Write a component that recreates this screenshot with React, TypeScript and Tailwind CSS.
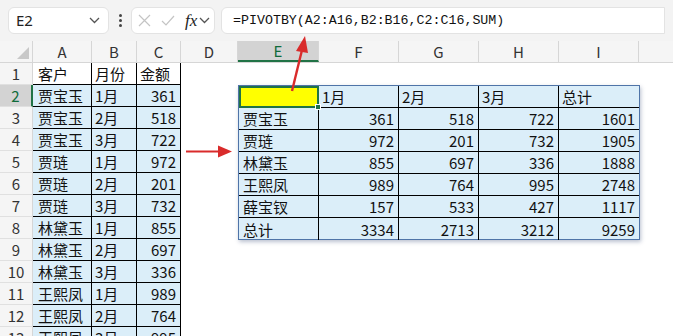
import { Fragment } from 'react';

const cjk = { fontFamily: '"Noto Sans CJK SC", "Noto Sans", sans-serif' };

const source: [string, string, number][] = [
  ['贾宝玉', '1月', 361], ['贾宝玉', '2月', 518], ['贾宝玉', '3月', 722],
  ['贾琏', '1月', 972], ['贾琏', '2月', 201], ['贾琏', '3月', 732],
  ['林黛玉', '1月', 855], ['林黛玉', '2月', 697], ['林黛玉', '3月', 336],
  ['王熙凤', '1月', 989], ['王熙凤', '2月', 764], ['王熙凤', '3月', 995],
];

const pivot: [string, number, number, number, number][] = [
  ['贾宝玉', 361, 518, 722, 1601],
  ['贾琏', 972, 201, 732, 1905],
  ['林黛玉', 855, 697, 336, 1888],
  ['王熙凤', 989, 764, 995, 2748],
  ['薛宝钗', 157, 533, 427, 1117],
  ['总计', 3334, 2713, 3212, 9259],
];

const cols = [
  { l: 'A', w: 'w-[59px]' }, { l: 'B', w: 'w-[45px]' }, { l: 'C', w: 'w-[44px]' },
  { l: 'D', w: 'w-[57px]' }, { l: 'E', w: 'w-[81px]' }, { l: 'F', w: 'w-[80px]' },
  { l: 'G', w: 'w-[80px]' }, { l: 'H', w: 'w-[80px]' }, { l: 'I', w: 'w-[80px]' },
];

function Chevron({ className }: { className?: string }) {
  return (
    <svg width="11" height="7" viewBox="0 0 11 7" className={className}>
      <path d="M1 1l4.5 4.5L10 1" fill="none" stroke="#555" strokeWidth="1.3" />
    </svg>
  );
}

function TopBar() {
  return (
    <div className="flex items-center h-[41px] bg-[#f3f3f3] px-2 gap-0">
      <div className="flex items-center justify-between w-[101px] h-[27px] bg-white border border-[#e3e3e3] rounded-md pl-[7px] pr-[8px]">
        <span className="text-[15px] text-[#222]" style={{ fontFamily: '"Noto Sans", sans-serif' }}>E2</span>
        <Chevron />
      </div>
      <div className="flex flex-col gap-[2px] w-[22px] items-center">
        <span className="w-[3px] h-[3px] rounded-full bg-[#444]" />
        <span className="w-[3px] h-[3px] rounded-full bg-[#444]" />
        <span className="w-[3px] h-[3px] rounded-full bg-[#444]" />
      </div>
      <div className="flex items-center w-[84px] h-[27px] bg-white border border-[#e3e3e3] rounded-md pl-[6px] gap-[10px]">
        <svg width="13" height="13" viewBox="0 0 13 13">
          <path d="M1 1l11 11M12 1L1 12" stroke="#c4c4c4" strokeWidth="1.2" />
        </svg>
        <svg width="14" height="11" viewBox="0 0 14 11">
          <path d="M1 6l4 4L13 1" fill="none" stroke="#c4c4c4" strokeWidth="1.2" />
        </svg>
        <div className="flex items-center gap-[2px]">
          <span className="italic text-[17px] leading-none text-[#222]" style={{ fontFamily: '"Liberation Serif", serif' }}>fx</span>
          <Chevron />
        </div>
      </div>
      <div className="flex items-center flex-1 ml-[6px] h-[27px] bg-white border border-[#e3e3e3] rounded-l-md pl-[11px]">
        <span className="text-[13.3px] text-[#111]" style={{ fontFamily: '"Liberation Mono", monospace' }}>
          =PIVOTBY(A2:A16,B2:B16,C2:C16,SUM)
        </span>
      </div>
    </div>
  );
}

function ColumnHeaders() {
  return (
    <div className="flex h-[22px] bg-[#f5f5f5] border-b border-[#d6d6d6]" style={cjk}>
      <div className="relative w-[33px] border-r border-[#d6d6d6]">
        <div className="absolute right-[3px] bottom-[3px] w-0 h-0 border-l-[12px] border-l-transparent border-b-[12px] border-b-[#c8c8c8]" />
      </div>
      {cols.map((c) => (
        <div
          key={c.l}
          className={`${c.w} flex items-center justify-center text-[15px] leading-none border-r border-[#d6d6d6] ${
            c.l === 'E' ? 'bg-[#d3d3d3] text-[#0f6b3a] border-b-2 border-b-[#217346]' : 'text-[#333]'
          }`}
        >
          {c.l}
        </div>
      ))}
      <div className="flex-1" />
    </div>
  );
}

function RowHeaders() {
  return (
    <div className="flex flex-col w-[33px] bg-[#f5f5f5]" style={cjk}>
      {Array.from({ length: 13 }, (_, i) => i + 1).map((n) => (
        <div
          key={n}
          className={`h-[22px] shrink-0 flex items-center justify-center text-[15px] leading-none border-b border-[#e0e0e0] ${
            n === 2 ? 'bg-[#d3d3d3] text-[#0f6b3a] border-r-2 border-r-[#217346]' : 'text-[#333] border-r border-r-[#d6d6d6]'
          }`}
        >
          {n}
        </div>
      ))}
    </div>
  );
}

function SourceTable() {
  const rows: [string, string, string | number][] = [['客户', '月份', '金额'], ...source];
  return (
    <div className="flex flex-col" style={cjk}>
      {rows.map((r, i) => {
        const fill = i === 0 ? 'bg-white' : 'bg-[#dbeef9]';
        return (
          <div key={i} className="flex h-[22px] shrink-0 text-[15px] leading-none text-[#111]">
            <div className={`w-[59px] ${fill} border-r border-b border-black flex items-center pl-[5px]`}>{r[0]}</div>
            <div className={`w-[45px] ${fill} border-r border-b border-black flex items-center pl-[3px]`}>{r[1]}</div>
            <div className={`w-[44px] ${fill} border-r border-b border-black flex items-center ${i === 0 ? 'pl-[3px]' : 'justify-end pr-[4px]'}`}>
              {r[2]}
            </div>
          </div>
        );
      })}
    </div>
  );
}

function PivotTable() {
  const widths = ['w-[80px]', 'w-[80px]', 'w-[80px]', 'w-[80px]', 'w-[80px]'];
  return (
    <div className="mt-[22px] h-[155px] border border-[#4f74a8] shadow-[1px_2px_4px_rgba(60,80,120,0.35)] bg-[#dbeef9]" style={cjk}>
      <div className="flex h-[22px] text-[15px] leading-none text-[#111]">
        <div className={`relative ${widths[0]} bg-[#ffff00] border-2 border-[#217346]`}>
          <div className="absolute -right-[4px] -bottom-[4px] w-[6px] h-[6px] bg-[#217346] border border-white" />
        </div>
        {['1月', '2月', '3月', '总计'].map((h, i) => (
          <div key={h} className={`${widths[i + 1]} border-b border-black ${i < 3 ? 'border-r' : ''} flex items-center pl-[3px]`}>
            {h}
          </div>
        ))}
      </div>
      {pivot.map((r) => (
        <div key={r[0]} className="flex h-[22px] text-[15px] leading-none text-[#111]">
          {r.map((v, j) => (
            <Fragment key={j}>
              <div
                className={`${widths[j]} flex items-center border-black ${j < 4 ? 'border-r' : ''} ${
                  r[0] === '总计' ? '' : 'border-b'
                } ${j === 0 ? 'pl-[4px]' : 'justify-end pr-[4px]'}`}
              >
                {v}
              </div>
            </Fragment>
          ))}
        </div>
      ))}
    </div>
  );
}

function Arrows() {
  return (
    <svg className="absolute left-0 top-0 pointer-events-none" width="673" height="336">
      <line x1="186" y1="151.5" x2="219" y2="151.5" stroke="#d92b2b" strokeWidth="2.2" />
      <polygon points="218,145.5 232,151.5 218,157.5" fill="#d92b2b" />
      <line x1="292" y1="91" x2="302" y2="50" stroke="#d92b2b" strokeWidth="2.4" />
      <polygon points="296,51 305,36 308,53" fill="#d92b2b" />
    </svg>
  );
}

export default function App() {
  return (
    <div className="relative w-[673px] h-[336px] overflow-hidden bg-white">
      <TopBar />
      <ColumnHeaders />
      <div className="flex">
        <RowHeaders />
        <SourceTable />
        <div className="w-[57px]" />
        <PivotTable />
      </div>
      <Arrows />
    </div>
  );
}
